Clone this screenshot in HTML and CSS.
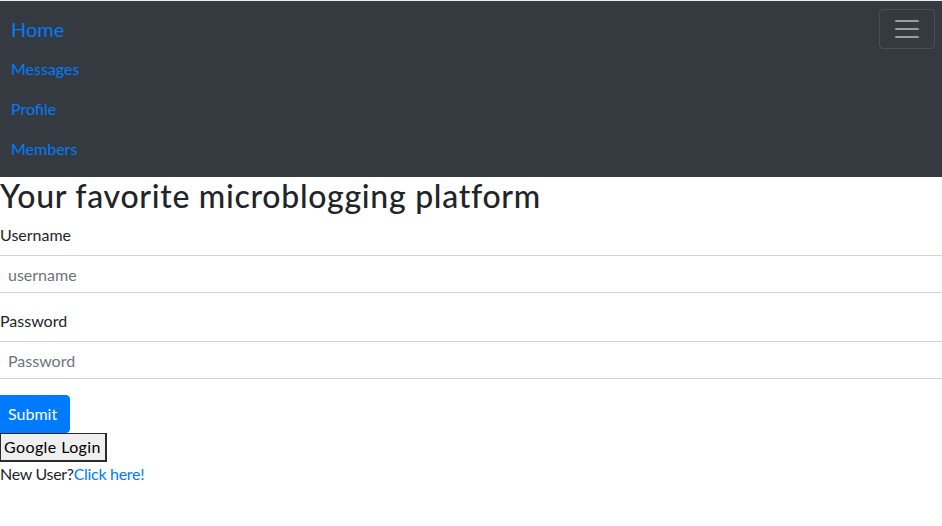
FILE: index.html
```html
<!DOCTYPE html>
<html lang="en">
<head>
<meta charset="utf-8">
<title>Microblog</title>
<link rel="stylesheet" href="styles.css">
</head>
<body>
<div class="page">
  <nav class="navbar">
    <div class="nav-top">
      <a class="brand" href="#">Home</a>
      <button class="toggler" type="button" aria-label="Toggle navigation">
        <svg class="toggler-icon" viewBox="0 0 30 30" width="30" height="30" aria-hidden="true">
          <path d="M4 7h22M4 15h22M4 23h22" stroke="rgba(255,255,255,0.5)" stroke-width="2" stroke-linecap="round" fill="none"/>
        </svg>
      </button>
    </div>
    <ul class="nav-list">
      <li><a class="nav-link" href="#">Messages</a></li>
      <li><a class="nav-link" href="#">Profile</a></li>
      <li><a class="nav-link" href="#">Members</a></li>
    </ul>
  </nav>
  <main class="content">
    <h1 class="title">Your favorite microblogging platform</h1>
    <form class="login-form">
      <div class="form-group">
        <label class="label" for="username">Username</label>
        <input class="input" id="username" type="text" placeholder="username">
      </div>
      <div class="form-group">
        <label class="label" for="password">Password</label>
        <input class="input" id="password" type="password" placeholder="Password">
      </div>
      <button class="btn-primary" type="button">Submit</button>
    </form>
    <button class="btn-google" type="button">Google Login</button>
    <p class="signup">New User?<a class="link" href="#">Click here!</a></p>
  </main>
</div>
</body>
</html>
```
FILE: styles.css
```css
* { box-sizing: border-box; }
html, body { margin: 0; padding: 0; }
body {
  font-family: Lato, "Noto Sans", sans-serif;
  font-size: 16px;
  line-height: 1.5;
  color: #212529;
  background: #fff;
  overflow: hidden;
  border-top: 1px solid #ececec;
}
.page {
  margin-left: -5px;
  margin-right: -9px;
}
.navbar {
  background: #343a40;
  padding: 8px 16px;
}
.nav-top {
  display: flex;
  justify-content: space-between;
  align-items: center;
}
.brand {
  font-size: 20px;
  line-height: 30px;
  padding: 5px 0;
  color: #007bff;
  text-decoration: none;
}
.toggler {
  display: flex;
  align-items: center;
  justify-content: center;
  width: 56px;
  height: 40px;
  padding: 4px 12px;
  background: transparent;
  border: 1px solid rgba(255,255,255,0.1);
  border-radius: 4px;
}
.toggler-icon { display: block; }
.nav-list {
  list-style: none;
  margin: 0;
  padding: 0;
}
.nav-link {
  display: block;
  padding: 8px 0;
  line-height: 24px;
  color: #007bff;
  text-decoration: none;
}
.content { padding: 0; }
.title {
  margin: 0 0 8px;
  font-size: 32px;
  font-weight: 500;
  line-height: 1.2;
  letter-spacing: 0.7px;
  padding-left: 5px;
}
.form-group { margin-bottom: 16px; }
.label {
  display: block;
  margin-bottom: 8px;
  padding-left: 5px;
}
.input {
  display: block;
  width: 100%;
  height: 38px;
  padding: 6px 12px;
  font: inherit;
  color: #495057;
  border: 1px solid #ced4da;
  border-left: 0;
  border-right: 0;
  border-radius: 0;
  background: #fff;
  padding-left: 13px;
}
.input::placeholder { color: #6c757d; }
.btn-primary {
  display: block;
  height: 38px;
  padding: 6px 12px;
  font: inherit;
  color: #fff;
  background: #007bff;
  border: 1px solid #007bff;
  border-radius: 4px;
}
.btn-google {
  display: block;
  margin-left: 5px;
  height: 29px;
  padding: 0 4px 0 3px;
  font: inherit;
  line-height: 24px;
  letter-spacing: 0.4px;
  color: #000;
  background: #efefef;
  border-style: solid;
  border-color: #2b2b2b;
  border-width: 1px 2px 2px 1px;
  border-radius: 0;
}
.signup {
  margin: 0;
  padding-left: 5px;
  letter-spacing: -0.3px;
}
.link {
  color: #007bff;
  text-decoration: none;
}
```
